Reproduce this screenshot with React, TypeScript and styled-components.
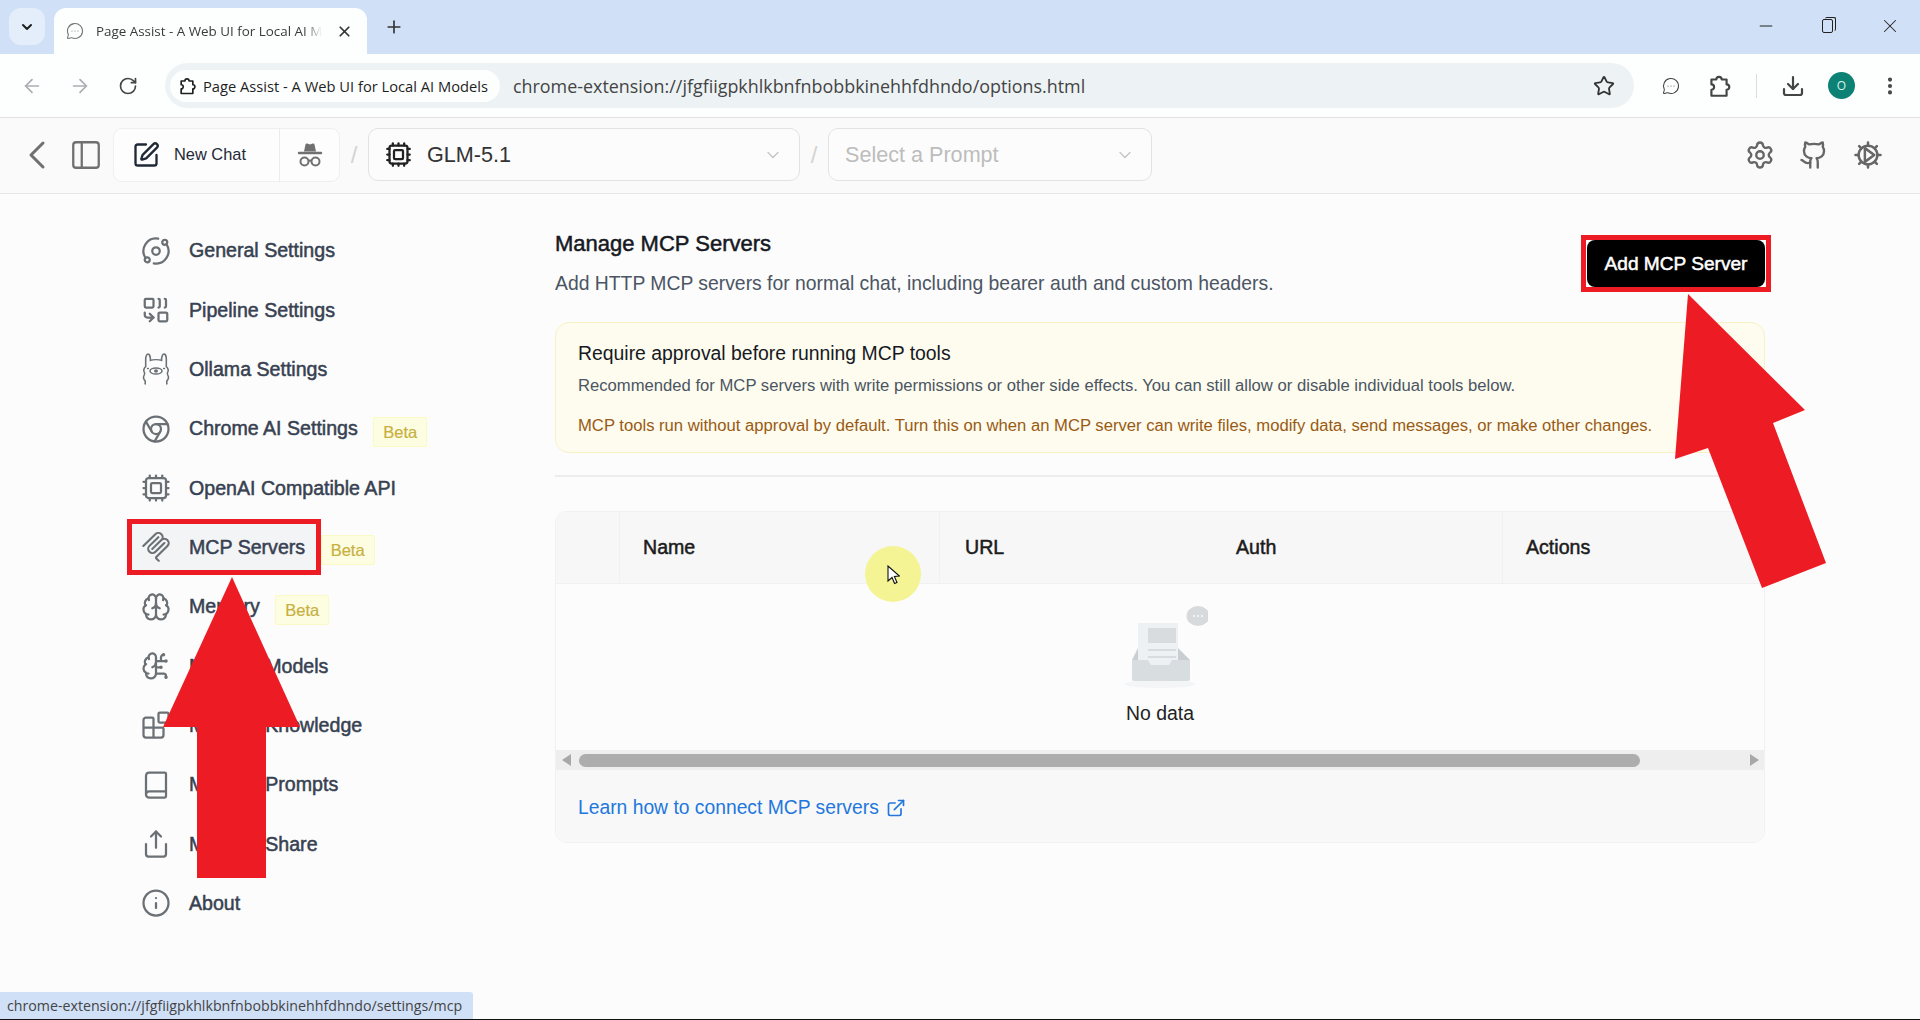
import React from 'react';
import styled, { createGlobalStyle } from 'styled-components';
import {
  ArrowLeft,
  ArrowRight,
  Blocks,
  Book,
  Brain,
  BrainCircuit,
  ChevronDown,
  Chrome,
  Combine,
  Cpu,
  Download,
  EllipsisVertical,
  ExternalLink,
  Github,
  Info,
  MessageCircleMore,
  Minus,
  Orbit,
  PanelLeft,
  Plus,
  RotateCw,
  Settings,
  Share,
  SquarePen,
  Star,
  X,
  ChevronLeft,
} from 'lucide-react';

const UI_FONT = `"Open Sans", "Noto Sans", sans-serif`;
const PAGE_FONT = `"Liberation Sans", Arial, sans-serif`;

const GlobalStyle = createGlobalStyle`
  html, body {
    margin: 0;
    padding: 0;
    height: 100%;
    overflow: hidden;
    background: #fcfcfc;
  }
  * {
    box-sizing: border-box;
  }
`;

const Page = styled.div`
  position: relative;
  display: flex;
  flex-direction: column;
  height: 1020px;
  overflow: hidden;
  background: #fcfcfc;
  border-bottom: 1px solid #111;
  font-family: ${PAGE_FONT};
`;

// Browser chrome
const TabStrip = styled.div`
  display: flex;
  align-items: flex-end;
  height: 54px;
  padding-left: 9px;
  background: #d0e0f7;
  font-family: ${UI_FONT};
`;

const TabSwitcher = styled.div`
  display: flex;
  align-items: center;
  justify-content: center;
  width: 36px;
  height: 37px;
  margin-bottom: 9px;
  border-radius: 12px;
  background: #e4edfa;
  color: #1f1f1f;
`;

const Tab = styled.div`
  display: flex;
  align-items: center;
  width: 313px;
  height: 46px;
  margin-left: 9px;
  padding: 0 14px 0 12px;
  border-radius: 12px 12px 0 0;
  background: #fdfefe;
  color: #777;
`;

const TabTitle = styled.span`
  flex: 1;
  margin: 0 14px 0 12px;
  overflow: hidden;
  white-space: nowrap;
  font-size: 13.4px;
  color: #3a3a3a;
  mask-image: linear-gradient(to right, #000 92%, transparent 100%);
`;

const NewTab = styled.div`
  display: flex;
  align-items: center;
  margin: 0 0 17px 17px;
  color: #333;
`;

const WindowControls = styled.div`
  display: flex;
  align-items: center;
  gap: 46px;
  margin: 0 19px 17px auto;
  color: #222;
`;

const RestoreIcon = styled.div`
  position: relative;
  width: 11px;
  height: 14px;
  border: 1px solid #222;
  border-radius: 2px;

  &::after {
    content: '';
    position: absolute;
    top: -3px;
    left: 2px;
    width: 10px;
    height: 13px;
    border-top: 1px solid #222;
    border-right: 1px solid #222;
    border-radius: 2px;
  }
`;

const AddressBar = styled.div`
  display: flex;
  align-items: center;
  height: 64px;
  padding-left: 20px;
  background: #fdfefe;
  border-bottom: 1px solid #e2e2e2;
  font-family: ${UI_FONT};
`;

const NavButton = styled.div<{ $dim?: boolean }>`
  display: flex;
  width: 24px;
  justify-content: center;
  margin-right: 24px;
  color: ${p => (p.$dim ? '#a9adb2' : '#444746')};
`;

const Omnibox = styled.div`
  display: flex;
  align-items: center;
  flex: none;
  width: 1469px;
  height: 45px;
  margin-left: 1px;
  padding: 0 19px 0 5px;
  border-radius: 23px;
  background: #edf3f5;
`;

const OriginChip = styled.div`
  display: flex;
  align-items: center;
  flex: none;
  gap: 6px;
  width: 330px;
  height: 32px;
  padding-left: 7px;
  border-radius: 16px;
  background: #fdfefe;
  font-size: 14.7px;
  color: #1f1f1f;
  white-space: nowrap;
`;

const UrlText = styled.span`
  margin-left: 13px;
  font-size: 17.9px;
  color: #444;
  white-space: nowrap;
`;

const StarSlot = styled.div`
  display: flex;
  margin-left: auto;
  color: #333;
`;

const ToolIcons = styled.div`
  display: flex;
  align-items: center;
  margin-left: 28px;
  color: #444;
`;

const ToolSpacer = styled.span`
  width: 26px;
`;

const ToolDivider = styled.div`
  width: 1px;
  height: 24px;
  margin: 0 24px 0 24px;
  background: #d8dde2;
`;

const Avatar = styled.div`
  display: flex;
  align-items: center;
  justify-content: center;
  width: 27px;
  height: 27px;
  margin: 0 24px 0 23px;
  border-radius: 50%;
  background: #0c8274;
  color: #d8f0ea;
  font-size: 12px;
`;

// Extension toolbar
const AppBar = styled.header`
  display: flex;
  align-items: center;
  height: 76px;
  padding: 0 0 2px 13px;
  background: #fafafa;
  border-bottom: 1px solid #e6e6e6;
  color: #707070;
`;

const SidebarToggle = styled.div`
  display: flex;
  margin-left: 8px;
`;

const ChatGroup = styled.div`
  display: flex;
  align-items: center;
  width: 227px;
  height: 54px;
  margin-left: 10px;
  border: 1px solid #efefef;
  border-radius: 9px;
  background: #fdfdfd;
`;

const NewChatButton = styled.div`
  display: flex;
  align-items: center;
  gap: 14px;
  width: 166px;
  height: 100%;
  padding-left: 18px;
  border-right: 1px solid #ececec;
  color: #1f2937;
  font-size: 16.4px;
`;

const IncognitoSlot = styled.div`
  display: flex;
  flex: 1;
  justify-content: center;
`;

const Slash = styled.span`
  width: 28px;
  text-align: center;
  font-size: 24px;
  color: #d4d4d4;
`;

const SelectBox = styled.div<{ $width: number; $placeholder?: boolean }>`
  display: flex;
  align-items: center;
  gap: 15px;
  width: ${p => p.$width}px;
  height: 53px;
  padding: 0 16px;
  border: 1px solid #e3e3e3;
  border-radius: 10px;
  background: #fcfcfc;
  color: ${p => (p.$placeholder ? '#bdbdbd' : '#333')};
  font-size: 21.6px;
`;

const SelectChevron = styled.div`
  display: flex;
  margin-left: auto;
  color: #c4c4c4;
`;

const AppBarActions = styled.div`
  display: flex;
  align-items: center;
  gap: 24px;
  margin: 0 37px 0 auto;
  color: #666;
`;

// Page body
const Body = styled.div`
  display: flex;
  flex: 1;
  min-height: 0;
`;

const Sidebar = styled.nav`
  flex: none;
  width: 428px;
  margin-left: 127px;
  padding-top: 27px;
`;

const NavRow = styled.div`
  display: flex;
  align-items: center;
  height: 59.35px;
`;

const NavLink = styled.div<{ $active?: boolean }>`
  display: flex;
  align-items: center;
  gap: 18px;
  height: 56px;
  padding: 0 10.5px 0 9px;
  border: 5px solid ${p => (p.$active ? '#ed1c24' : 'transparent')};
  background: ${p => (p.$active ? '#f3f4f6' : 'transparent')};
  color: #6b7075;
`;

const NavLabel = styled.span`
  font-size: 19.6px;
  color: #374151;
  -webkit-text-stroke: 0.5px #374151;
  white-space: nowrap;
`;

const BetaBadge = styled.span`
  margin-top: 6px;
  padding: 0 9px;
  height: 30px;
  line-height: 28px;
  border: 1px solid #fbfac4;
  border-radius: 2px;
  background: #fdfde2;
  color: #c8b040;
  -webkit-text-stroke: 0.2px #c8b040;
  font-size: 16.5px;
`;

const Main = styled.main`
  display: flex;
  flex-direction: column;
  width: 1210px;
  padding-top: 38px;
`;

const HeaderRow = styled.div`
  display: flex;
  justify-content: space-between;
  align-items: flex-start;
`;

const Heading = styled.h2`
  margin: 0;
  font-size: 22px;
  line-height: 24px;
  font-weight: 400;
  color: #16191f;
  -webkit-text-stroke: 0.5px #16191f;
`;

const SubHeading = styled.p`
  margin: 15px 0 0;
  font-size: 19.35px;
  line-height: 24px;
  color: #4b5563;
`;

const ButtonFrame = styled.div`
  margin: 3px -6px 0 0;
  padding: 0 1px;
  border: 5px solid #ed1c24;
  background: #fff;
`;

const AddButton = styled.button`
  display: block;
  width: 178px;
  height: 47px;
  border: 0;
  border-radius: 8px;
  background: #000;
  color: #fff;
  font: 400 19.1px ${PAGE_FONT};
  -webkit-text-stroke: 0.5px #fff;
`;

const Callout = styled.section`
  margin-top: 27px;
  padding: 19px 22px 16px;
  border: 1px solid #f9f1c6;
  border-radius: 14px;
  background: #fdfcee;
`;

const CalloutTitle = styled.div`
  font-size: 19.4px;
  line-height: 22px;
  color: #16191f;
`;

const CalloutText = styled.div<{ $warn?: boolean }>`
  margin-top: ${p => (p.$warn ? '20px' : '12px')};
  font-size: 16.65px;
  line-height: 20px;
  color: ${p => (p.$warn ? '#9a5a14' : '#4b5563')};
`;

const Divider = styled.hr`
  width: 100%;
  height: 2px;
  margin: 22px 0 0;
  border: 0;
  background: #ececec;
`;

const TableCard = styled.section`
  margin-top: 34px;
  border: 1px solid #f1f1f1;
  border-radius: 12px;
  overflow: hidden;
  background: #fcfcfc;
`;

const TableHead = styled.div`
  display: grid;
  grid-template-columns: 64px 320px 273px 290px 1fr;
  height: 72px;
  background: #f7f7f7;
  border-bottom: 1px solid #f1f1f1;
`;

const HeadCell = styled.div<{ $sep?: boolean; $pad?: number }>`
  display: flex;
  align-items: center;
  padding-left: ${p => p.$pad ?? 23}px;
  font-size: 19.6px;
  color: #1c1c1c;
  -webkit-text-stroke: 0.5px #1c1c1c;
  border-right: 1px solid ${p => (p.$sep ? '#f1f1f1' : 'transparent')};
`;

const EmptyState = styled.div`
  display: flex;
  flex-direction: column;
  align-items: center;
  height: 166px;
  padding-top: 16px;
`;

const EmptyLabel = styled.div`
  margin-top: 10px;
  font-size: 19.4px;
  line-height: 22px;
  color: #222;
`;

const ScrollTrack = styled.div`
  display: flex;
  align-items: center;
  height: 20px;
  padding: 0 5px 0 6px;
  background: #eeeeee;
`;

const ScrollArrow = styled.div<{ $right?: boolean }>`
  width: 0;
  height: 0;
  border-top: 6px solid transparent;
  border-bottom: 6px solid transparent;
  border-${p => (p.$right ? 'left' : 'right')}: 9px solid #a8a8a8;
  margin-left: ${p => (p.$right ? 'auto' : '0')};
`;

const ScrollThumb = styled.div`
  width: 1061px;
  height: 13px;
  margin-left: 8px;
  border-radius: 7px;
  background: #adadad;
`;

const TableFooter = styled.div`
  display: flex;
  align-items: center;
  height: 72px;
  padding: 3px 0 0 22px;
  background: #f8f8f8;
`;

const LearnLink = styled.a`
  display: flex;
  align-items: center;
  gap: 7px;
  font-size: 19.3px;
  color: #2277dd;
  text-decoration: none;
`;

// Things lying over the page
const StatusBubble = styled.div`
  position: absolute;
  left: 0;
  bottom: 0;
  width: 473px;
  height: 27px;
  padding-left: 7px;
  background: #d0e0f7;
  border-top-right-radius: 3px;
  font: 14.2px/27px ${UI_FONT};
  color: #444;
  white-space: nowrap;
`;

const CursorHalo = styled.div`
  position: absolute;
  left: 865px;
  top: 546px;
  width: 56px;
  height: 56px;
  border-radius: 50%;
  background: #f4f495;
`;

const CursorArrowSvg = styled.svg`
  position: absolute;
  left: 22px;
  top: 19px;
`;

const Annotations = styled.svg`
  position: absolute;
  inset: 0;
  pointer-events: none;
`;

const ExtensionIcon: React.FC<{ size: number }> = ({ size }) => (
  <svg width={size} height={size} viewBox="0 0 24 24" fill="none" stroke="currentColor" strokeWidth="2" strokeLinejoin="round">
    <path d="M5 6h4.5a2.5 2.5 0 0 1 5 0H19v4.5a2.5 2.5 0 0 1 0 5V21H5v-5.5a2.5 2.5 0 0 0 0-5z" />
  </svg>
);

const IncognitoIcon: React.FC = () => (
  <svg width="28" height="26" viewBox="0 0 28 26" fill="none" stroke="currentColor" strokeWidth="2">
    <path d="M8 9.5 9.5 2.5c.2-.9 1-1.2 1.8-.9l2.7 1 2.7-1c.8-.3 1.6 0 1.8.9L20 9.5z" fill="currentColor" stroke="none" />
    <path d="M3 11h22" strokeWidth="2.4" strokeLinecap="round" />
    <circle cx="8.5" cy="19.5" r="4" />
    <circle cx="19.5" cy="19.5" r="4" />
    <path d="M12.5 19c1-.7 2-.7 3 0" />
  </svg>
);

const LlamaIcon: React.FC = () => (
  <svg width="30" height="32" viewBox="2.5 0 25 32" preserveAspectRatio="none" fill="none" stroke="currentColor" strokeWidth="1.3" strokeLinecap="round">
    <path d="M6 31v-3c-1.2-1.5-1.8-4-.8-6 .4-1 .6-2.4-.2-3.6-.6-1.2.2-3.6 1.4-4.6V6c0-2.8 1-5 2-5s2 2.6 2 6.4c2-1 7.2-1 9.2 0 0-3.8 1-6.4 2-6.4s2 2.2 2 5v7.8c1.2 1 2 3.4 1.4 4.6-.8 1.2-.6 2.6-.2 3.6 1 2 .4 4.5-.8 6v3" />
    <ellipse cx="15" cy="18" rx="5" ry="3" />
    <circle cx="15" cy="18" r="1" fill="currentColor" />
    <path d="M8 15.5h.6M21.4 15.5h.6" />
  </svg>
);

const McpIcon: React.FC = () => (
  <svg width="30" height="30" viewBox="0 0 24 24" fill="currentColor">
    <path d="M15.688 2.343a2.588 2.588 0 00-3.61 0l-9.626 9.44a.863.863 0 01-1.203 0 .823.823 0 010-1.18l9.626-9.44a4.313 4.313 0 016.016 0 4.116 4.116 0 011.204 3.54 4.3 4.3 0 013.609 1.18l.05.05a4.115 4.115 0 010 5.9l-8.706 8.537a.274.274 0 000 .393l1.788 1.754a.823.823 0 010 1.18.863.863 0 01-1.203 0l-1.788-1.753a1.92 1.92 0 010-2.754l8.706-8.538a2.47 2.47 0 000-3.54l-.05-.049a2.588 2.588 0 00-3.607-.003l-7.172 7.034-.002.002-.098.097a.863.863 0 01-1.204 0 .823.823 0 010-1.18l7.273-7.133a2.47 2.47 0 00-.003-3.537z" />
    <path d="M14.485 4.703a.823.823 0 000-1.18.863.863 0 00-1.204 0l-7.119 6.982a4.115 4.115 0 000 5.9 4.314 4.314 0 006.016 0l7.12-6.982a.823.823 0 000-1.18.863.863 0 00-1.204 0l-7.119 6.982a2.588 2.588 0 01-3.61 0 2.47 2.47 0 010-3.54l7.12-6.982z" />
  </svg>
);

const GearPlayIcon: React.FC = () => (
  <svg width="30" height="30" viewBox="0 0 24 24" fill="none" stroke="currentColor" strokeWidth="2" strokeLinecap="round" strokeLinejoin="round">
    <circle cx="12" cy="12" r="7.5" />
    <path d="M12 2v2.5M12 19.5V22M2 12h2.5M19.5 12H22M4.9 4.9l1.8 1.8M17.3 17.3l1.8 1.8M4.9 19.1l1.8-1.8M17.3 6.7l1.8-1.8" />
    <path d="M9.5 6.5 17 12l-7.5 5.5z" />
  </svg>
);

const EmptyInbox: React.FC = () => (
  <svg width="96" height="92" viewBox="0 0 96 92">
    <ellipse cx="48" cy="84" rx="36" ry="4" fill="#f4f5f6" />
    <path d="M20 60l6-12h40l12 12z" fill="#c8ced2" />
    <rect x="26" y="23" width="40" height="42" fill="#eef1f3" />
    <rect x="36" y="28" width="28" height="15" fill="#d9dcde" />
    <path d="M36 50h28M36 57h28" stroke="#d9dcde" strokeWidth="2" />
    <path d="M20 60h16l3 5h18l3-5h18v19a2 2 0 0 1-2 2H22a2 2 0 0 1-2-2z" fill="#d8dde0" />
    <ellipse cx="86" cy="16" rx="11.5" ry="10" fill="#d6dadd" />
    <path d="M81 16h10" stroke="#f2f2f2" strokeWidth="2" strokeDasharray="2 2" />
  </svg>
);

const CursorArrow: React.FC = () => (
  <CursorArrowSvg width="13" height="20" viewBox="0 0 13 20">
    <path d="M1 1v15l4-3.5 2.6 6 2.4-1-2.6-6 5-.5z" fill="#fff" stroke="#111" strokeWidth="1.1" />
  </CursorArrowSvg>
);

const navItems = [
  { label: 'General Settings', icon: <Orbit size={30} strokeWidth={1.8} /> },
  { label: 'Pipeline Settings', icon: <Combine size={30} strokeWidth={1.8} /> },
  { label: 'Ollama Settings', icon: <LlamaIcon /> },
  { label: 'Chrome AI Settings', icon: <Chrome size={30} strokeWidth={1.8} />, beta: true },
  { label: 'OpenAI Compatible API', icon: <Cpu size={30} strokeWidth={1.8} /> },
  { label: 'MCP Servers', icon: <McpIcon />, beta: true, active: true },
  { label: 'Memory', icon: <Brain size={30} strokeWidth={1.8} />, beta: true },
  { label: 'Manage Models', icon: <BrainCircuit size={30} strokeWidth={1.8} /> },
  { label: 'Manage Knowledge', icon: <Blocks size={30} strokeWidth={1.8} /> },
  { label: 'Manage Prompts', icon: <Book size={30} strokeWidth={1.8} /> },
  { label: 'Manage Share', icon: <Share size={30} strokeWidth={1.8} /> },
  { label: 'About', icon: <Info size={30} strokeWidth={1.8} /> },
];

const App: React.FC = () => (
  <Page>
    <GlobalStyle />
    <TabStrip>
      <TabSwitcher>
        <ChevronDown size={16} strokeWidth={3} />
      </TabSwitcher>
      <Tab>
        <MessageCircleMore size={18} strokeWidth={1.5} />
        <TabTitle>Page Assist - A Web UI for Local AI Models</TabTitle>
        <X size={17} strokeWidth={2.4} color="#333" />
      </Tab>
      <NewTab>
        <Plus size={20} strokeWidth={2} />
      </NewTab>
      <WindowControls>
        <Minus size={20} strokeWidth={1.2} />
        <RestoreIcon />
        <X size={22} strokeWidth={1.1} />
      </WindowControls>
    </TabStrip>

    <AddressBar>
      <NavButton $dim>
        <ArrowLeft size={22} strokeWidth={1.8} />
      </NavButton>
      <NavButton $dim>
        <ArrowRight size={22} strokeWidth={1.8} />
      </NavButton>
      <NavButton>
        <RotateCw size={20} strokeWidth={2} />
      </NavButton>
      <Omnibox>
        <OriginChip>
          <ExtensionIcon size={20} />
          Page Assist - A Web UI for Local AI Models
        </OriginChip>
        <UrlText>chrome-extension://jfgfiigpkhlkbnfnbobbkinehhfdhndo/options.html</UrlText>
        <StarSlot>
          <Star size={22} strokeWidth={2} />
        </StarSlot>
      </Omnibox>
      <ToolIcons>
        <MessageCircleMore size={18} strokeWidth={1.4} />
        <ToolSpacer />
        <ExtensionIcon size={26} />
        <ToolDivider />
        <Download size={24} strokeWidth={2.2} />
        <Avatar>O</Avatar>
        <EllipsisVertical size={22} strokeWidth={2.5} />
      </ToolIcons>
    </AddressBar>

    <AppBar>
      <ChevronLeft size={48} strokeWidth={1.5} />
      <SidebarToggle>
        <PanelLeft size={34} strokeWidth={1.6} />
      </SidebarToggle>
      <ChatGroup>
        <NewChatButton>
          <SquarePen size={28} strokeWidth={2} />
          New Chat
        </NewChatButton>
        <IncognitoSlot>
          <IncognitoIcon />
        </IncognitoSlot>
      </ChatGroup>
      <Slash>/</Slash>
      <SelectBox $width={432}>
        <Cpu size={27} strokeWidth={2} color="#222" />
        GLM-5.1
        <SelectChevron>
          <ChevronDown size={20} strokeWidth={1.6} />
        </SelectChevron>
      </SelectBox>
      <Slash>/</Slash>
      <SelectBox $width={324} $placeholder>
        Select a Prompt
        <SelectChevron>
          <ChevronDown size={20} strokeWidth={1.6} />
        </SelectChevron>
      </SelectBox>
      <AppBarActions>
        <Settings size={30} strokeWidth={1.9} />
        <Github size={30} strokeWidth={1.9} />
        <GearPlayIcon />
      </AppBarActions>
    </AppBar>

    <Body>
      <Sidebar>
        {navItems.map(item => (
          <NavRow key={item.label}>
            <NavLink $active={item.active}>
              {item.icon}
              <NavLabel>{item.label}</NavLabel>
            </NavLink>
            {item.beta && <BetaBadge>Beta</BetaBadge>}
          </NavRow>
        ))}
      </Sidebar>

      <Main>
        <HeaderRow>
          <div>
            <Heading>Manage MCP Servers</Heading>
            <SubHeading>Add HTTP MCP servers for normal chat, including bearer auth and custom headers.</SubHeading>
          </div>
          <ButtonFrame>
            <AddButton>Add MCP Server</AddButton>
          </ButtonFrame>
        </HeaderRow>

        <Callout>
          <CalloutTitle>Require approval before running MCP tools</CalloutTitle>
          <CalloutText>
            Recommended for MCP servers with write permissions or other side effects. You can still allow or disable individual tools below.
          </CalloutText>
          <CalloutText $warn>
            MCP tools run without approval by default. Turn this on when an MCP server can write files, modify data, send messages, or make other changes.
          </CalloutText>
        </Callout>

        <Divider />

        <TableCard>
          <TableHead>
            <HeadCell $sep />
            <HeadCell $sep>Name</HeadCell>
            <HeadCell $pad={25}>URL</HeadCell>
            <HeadCell $sep $pad={23}>Auth</HeadCell>
            <HeadCell>Actions</HeadCell>
          </TableHead>
          <EmptyState>
            <EmptyInbox />
            <EmptyLabel>No data</EmptyLabel>
          </EmptyState>
          <ScrollTrack>
            <ScrollArrow />
            <ScrollThumb />
            <ScrollArrow $right />
          </ScrollTrack>
          <TableFooter>
            <LearnLink>
              Learn how to connect MCP servers
              <ExternalLink size={20} strokeWidth={2} />
            </LearnLink>
          </TableFooter>
        </TableCard>
      </Main>
    </Body>

    <CursorHalo>
      <CursorArrow />
    </CursorHalo>

    <Annotations width="1920" height="1020" viewBox="0 0 1920 1020">
      <polygon points="232,577 300,727 266,727 266,878 197,878 197,727 163,727" fill="#ed1c24" />
      <polygon points="1688,294 1805,410 1773,423 1826,563 1762,588 1708,448 1675,459" fill="#ed1c24" />
    </Annotations>

    <StatusBubble>chrome-extension://jfgfiigpkhlkbnfnbobbkinehhfdhndo/settings/mcp</StatusBubble>
  </Page>
);

export default App;
